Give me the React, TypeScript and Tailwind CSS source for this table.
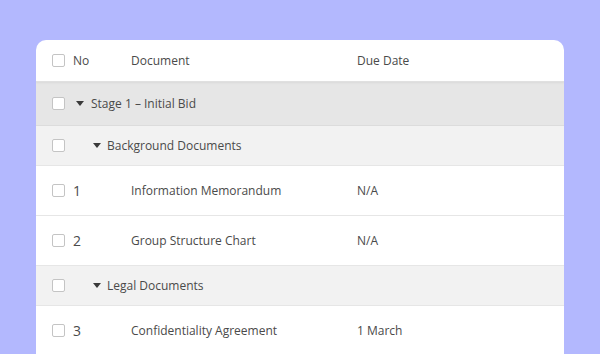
import React from 'react';

type Row =
  | { kind: 'stage'; label: string }
  | { kind: 'group'; label: string }
  | { kind: 'doc'; no: number; title: string; due: string };

const rows: Row[] = [
  { kind: 'stage', label: 'Stage 1 – Initial Bid' },
  { kind: 'group', label: 'Background Documents' },
  { kind: 'doc', no: 1, title: 'Information Memorandum', due: 'N/A' },
  { kind: 'doc', no: 2, title: 'Group Structure Chart', due: 'N/A' },
  { kind: 'group', label: 'Legal Documents' },
  { kind: 'doc', no: 3, title: 'Confidentiality Agreement', due: '1 March' },
];

const Checkbox = () => (
  <span className="block w-[13px] h-[13px] shrink-0 rounded-[2px] border border-[#c4c4c4] bg-white" />
);

const Caret = () => (
  <svg width="8" height="5" viewBox="0 0 8 5" className="shrink-0">
    <path d="M0 0h8L4 5z" fill="#3a3a3a" />
  </svg>
);

export default function App() {
  return (
    <div
      className="w-[600px] h-[354px] overflow-hidden bg-[#b3b8fe] pt-10 px-9 text-[#4a4a4a]"
      style={{ fontFamily: '"Open Sans", Arial, sans-serif' }}
    >
      <div className="bg-white rounded-t-[10px] overflow-hidden">
        <div className="h-[42px] flex items-center pl-4 text-[12px] border-b border-[#e0e0e0] shadow-[0_1px_2px_rgba(0,0,0,0.06)] relative">
          <Checkbox />
          <span className="ml-2 w-[58px]">No</span>
          <span className="w-[226px]">Document</span>
          <span>Due Date</span>
        </div>

        {rows.map((row, i) => {
          if (row.kind === 'stage') {
            return (
              <div key={i} className="h-[44px] flex items-center pl-4 bg-[#e6e6e6] text-[12px] border-b border-[#dcdcdc]">
                <Checkbox />
                <span className="ml-[11px] mr-[7px] flex"><Caret /></span>
                <span>{row.label}</span>
              </div>
            );
          }
          if (row.kind === 'group') {
            return (
              <div key={i} className="h-[40px] flex items-center pl-4 bg-[#f2f2f2] text-[12px] border-b border-[#e6e6e6]">
                <Checkbox />
                <span className="ml-[28px] mr-[6px] flex"><Caret /></span>
                <span>{row.label}</span>
              </div>
            );
          }
          return (
            <div key={i} className="h-[50px] flex items-center pl-4 bg-white text-[12px] border-b border-[#e6e6e6]">
              <Checkbox />
              <span className="ml-2 w-[58px] text-[14px]">{row.no}</span>
              <span className="w-[226px]">{row.title}</span>
              <span>{row.due}</span>
            </div>
          );
        })}
      </div>
    </div>
  );
}
